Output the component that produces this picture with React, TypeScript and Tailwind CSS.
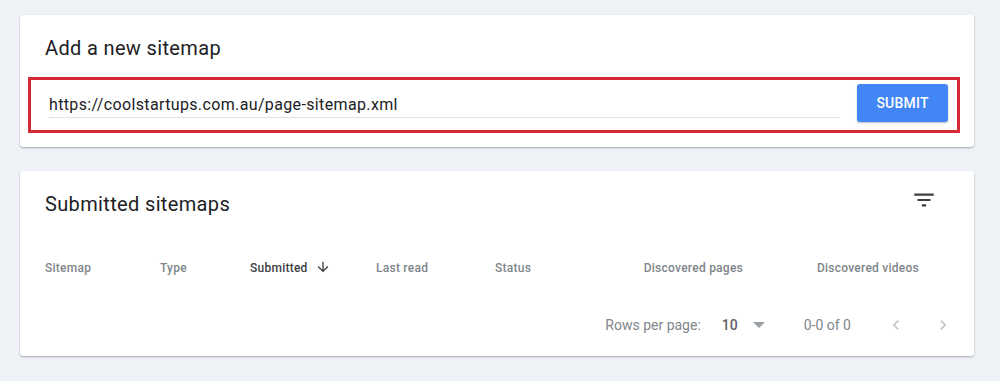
import React from "react";

const font = { fontFamily: "Roboto, 'Noto Sans', Arial, sans-serif" };

function FilterIcon() {
  return (
    <svg width="26" height="26" viewBox="0 0 24 24" className="text-[#3c4043]">
      <path fill="currentColor" d="M10 18h4v-2h-4v2zM3 6v2h18V6H3zm3 7h12v-2H6v2z" />
    </svg>
  );
}

function ArrowDown() {
  return (
    <svg width="16" height="16" viewBox="0 0 24 24" className="text-[#3c4043]">
      <path fill="currentColor" d="M20 12l-1.41-1.41L13 16.17V4h-2v12.17l-5.58-5.59L4 12l8 8 8-8z" />
    </svg>
  );
}

function Chevron({ dir }: { dir: "left" | "right" }) {
  return (
    <svg width="20" height="20" viewBox="0 0 24 24" className="text-[#c4c7cc]">
      <path
        fill="currentColor"
        d={
          dir === "left"
            ? "M15.41 7.41L14 6l-6 6 6 6 1.41-1.41L10.83 12z"
            : "M10 6L8.59 7.41 13.17 12l-4.58 4.59L10 18l6-6z"
        }
      />
    </svg>
  );
}

export default function App() {
  return (
    <div style={font} className="w-[1000px] h-[381px] bg-[#eef1f6] pt-[15px] pl-[20px] overflow-hidden">
      {/* add sitemap card */}
      <div className="w-[954px] h-[132px] bg-white rounded-[3px] shadow-[0_1px_2px_rgba(0,0,0,0.3)] pt-[19px]">
        <h2 className="pl-[25px] text-[20px] leading-[28px] tracking-[0.35px] text-[#202124]">Add a new sitemap</h2>
        <div className="ml-[8px] mt-[15px] w-[932px] border-[3px] border-[#d42a35] flex items-start pl-[18px] pr-[9px] pb-[8px]">
          <div className="flex-1 mt-[13px] text-[16px] leading-[24px] tracking-[0.36px] text-[#202124] border-b border-[#e0e0e0]">
            https://coolstartups.com.au/page-sitemap.xml
          </div>
          <button className="ml-[17px] mt-[4px] w-[91px] h-[38px] rounded-[3px] bg-[#4285f4] text-white text-[14px] font-medium tracking-[0.2px] shadow-[0_1px_2px_rgba(0,0,0,0.25)]">
            SUBMIT
          </button>
        </div>
      </div>

      {/* submitted sitemaps card */}
      <div className="mt-[24px] w-[954px] h-[185px] bg-white rounded-[3px] shadow-[0_1px_2px_rgba(0,0,0,0.3)] pt-[19px]">
        <div className="flex items-center justify-between pl-[25px] pr-[37px] h-[28px]">
          <h2 className="text-[20px] leading-[28px] tracking-[0.35px] text-[#202124]">Submitted sitemaps</h2>
          <div className="-mt-[8px]">
            <FilterIcon />
          </div>
        </div>

        <div className="mt-[26px] h-[48px] flex items-center pl-[25px] text-[12px] font-medium tracking-[0.25px] text-[#80868b]">
          <div className="w-[115px]">Sitemap</div>
          <div className="w-[90px]">Type</div>
          <div className="w-[126px] flex items-center text-[#3c4043]">
            <span>Submitted</span>
            <span className="ml-[7px] -mt-[2px]">
              <ArrowDown />
            </span>
          </div>
          <div className="w-[119px]">Last read</div>
          <div className="w-[100px]">Status</div>
          <div className="w-[148px] text-right">Discovered pages</div>
          <div className="w-[176px] text-right">Discovered videos</div>
        </div>

        <div className="mt-[9px] h-[48px] flex items-center justify-end pr-[21px] text-[14px] text-[#80868b]">
          <span>Rows per page:</span>
          <span className="ml-[21px] font-medium text-[#5f6368]">10</span>
          <svg width="12" height="6" viewBox="0 0 12 6" className="ml-[15px] text-[#9aa0a6]">
            <path fill="currentColor" d="M0 0h12L6 6z" />
          </svg>
          <span className="ml-[39px]">0-0 of 0</span>
          <span className="ml-[35px] flex">
            <Chevron dir="left" />
          </span>
          <span className="ml-[27px] flex">
            <Chevron dir="right" />
          </span>
        </div>
      </div>
    </div>
  );
}
